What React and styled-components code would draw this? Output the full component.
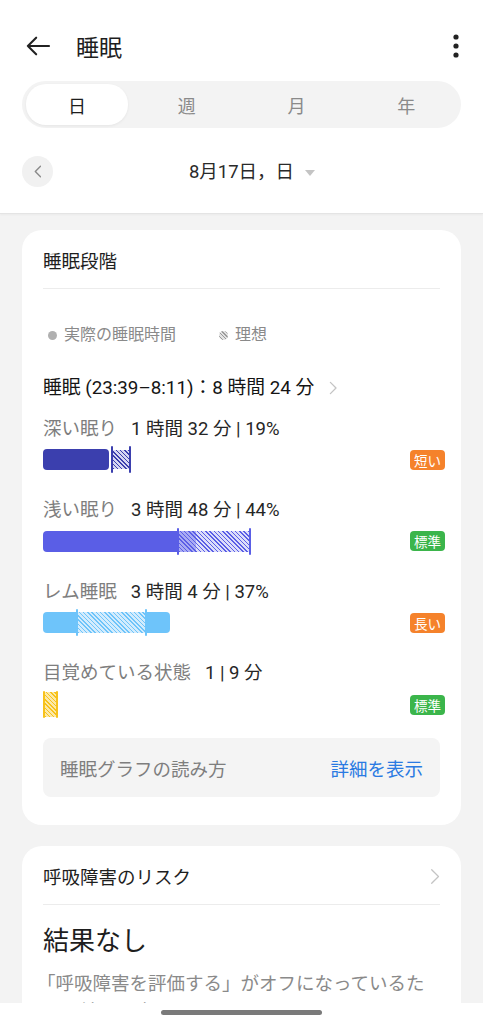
import React from "react";
import styled, { createGlobalStyle, css } from "styled-components";

const Global = createGlobalStyle`
  html, body { margin: 0; padding: 0; }
  body {
    background: #f3f3f3;
    font-family: Roboto, "Noto Sans CJK JP", "Noto Sans", sans-serif;
    color: #222;
    -webkit-font-smoothing: antialiased;
  }
  * { box-sizing: border-box; }
`;

const Page = styled.div`
  width: 483px;
  min-height: 1100px;
  background: #f3f3f3;
`;

const Header = styled.header`
  background: #fff;
  border-bottom: 1px solid #e4e4e4;
  box-shadow: 0 1px 2px rgba(0, 0, 0, 0.04);
`;

const TopBar = styled.div`
  height: 81px;
  padding: 10px 24px 0 26px;
  display: flex;
  align-items: center;
`;

const IconBtn = styled.button`
  border: 0;
  background: none;
  padding: 0;
  width: 24px;
  height: 24px;
  display: flex;
  align-items: center;
  justify-content: center;
  color: #222;
`;

const Title = styled.h1`
  margin: 0 0 0 26px;
  font-size: 23px;
  font-weight: 400;
  color: #1e1e1e;
  flex: 1;
`;

const Segmented = styled.div`
  margin: 0 22px;
  height: 47px;
  border-radius: 24px;
  background: #f3f3f3;
  display: grid;
  grid-template-columns: repeat(4, 1fr);
`;

const Tab = styled.div`
  margin: 3px 4px;
  border-radius: 20px;
  display: flex;
  align-items: center;
  justify-content: center;
  font-size: 18px;
  color: #8a8a8a;
  ${(p) =>
    p.$active &&
    css`
      background: #fff;
      color: #1e1e1e;
      box-shadow: 0 1px 3px rgba(0, 0, 0, 0.06);
    `}
`;

const DateRow = styled.div`
  margin: 28px 22px 0;
  padding-bottom: 26px;
  display: grid;
  grid-template-columns: 31px 1fr 31px;
  align-items: center;
`;

const RoundBtn = styled.div`
  width: 31px;
  height: 31px;
  border-radius: 50%;
  background: #f1f1f1;
  display: flex;
  align-items: center;
  justify-content: center;
`;

const DateLabel = styled.div`
  justify-self: center;
  position: relative;
  font-size: 18.5px;
  color: #2a2a2a;
  line-height: 24px;
`;

const Caret = styled.span`
  position: absolute;
  left: calc(100% + 11px);
  top: 10px;
  width: 0;
  height: 0;
  border-left: 5px solid transparent;
  border-right: 5px solid transparent;
  border-top: 6px solid #c4c4c4;
`;

const Content = styled.main`
  padding: 16px 22px 0;
  display: flex;
  flex-direction: column;
  gap: 21px;
`;

const Card = styled.section`
  background: #fff;
  border-radius: 20px;
  padding: 0 21px ${(p) => p.$pb || 28}px;
`;

const CardHead = styled.div`
  height: 59px;
  padding-top: 2px;
  display: flex;
  align-items: center;
  justify-content: space-between;
  border-bottom: 1px solid #ececec;
  font-size: 18.5px;
  color: #1e1e1e;
`;

const Legend = styled.div`
  margin-top: 36px;
  display: flex;
  align-items: center;
  gap: 43px;
  padding-left: 5px;
  font-size: 16px;
  line-height: 20px;
  color: #8a8a8a;
`;

const LegendItem = styled.span`
  display: flex;
  align-items: center;
  gap: 7px;
`;

const Dot = styled.span`
  width: 9px;
  height: 9px;
  border-radius: 50%;
  background: ${(p) =>
    p.$hatched
      ? "repeating-linear-gradient(45deg, #9a9a9a 0 1px, #e2e2e2 1px 2.5px)"
      : "#b0b0b0"};
`;

const Summary = styled.div`
  margin-top: 31px;
  display: flex;
  align-items: center;
  gap: 15px;
  font-size: 18.8px;
  line-height: 24px;
  color: #151515;
`;

const Stage = styled.div`
  margin-top: ${(p) => p.$mt}px;
`;

const StageLabel = styled.div`
  display: flex;
  align-items: baseline;
  gap: 14px;
  font-size: 18.5px;
  line-height: 24px;
`;

const StageName = styled.span`
  color: #7e7e7e;
`;

const StageValue = styled.span`
  color: #262626;
`;

const BarRow = styled.div`
  margin-top: ${(p) => p.$mt ?? 8.5}px;
  height: 21px;
  display: flex;
  align-items: center;
  justify-content: space-between;
`;

const Bar = styled.div`
  height: 21px;
  display: flex;
  align-items: center;
`;

const Solid = styled.div`
  height: 21px;
  width: ${(p) => p.$w}px;
  background: ${(p) => p.$c};
  border-radius: ${(p) => p.$r || "4px"};
`;

const Hatch = styled.div`
  height: ${(p) => p.$h || 21}px;
  width: ${(p) => p.$w}px;
  background: repeating-linear-gradient(
    45deg,
    ${(p) => p.$c} 0 1px,
    ${(p) => p.$bg} 1px 3px
  );
`;

const Marker = styled.div`
  width: 2px;
  height: ${(p) => p.$h || 27}px;
  background: ${(p) => p.$c};
  border-radius: 1px;
  margin-left: ${(p) => p.$ml || 0}px;
`;

const Badge = styled.span`
  width: 35px;
  height: 20px;
  border-radius: 4px;
  background: ${(p) => (p.$tone === "warn" ? "#f5822b" : "#3bb54b")};
  color: #fff;
  font-size: 13.5px;
  display: flex;
  align-items: center;
  justify-content: center;
  margin-right: -5px;
`;

const InfoBox = styled.div`
  margin-top: 23px;
  height: 59px;
  border-radius: 8px;
  background: #f4f4f4;
  padding: 0 17px;
  display: flex;
  align-items: center;
  justify-content: space-between;
  font-size: 18.5px;
`;

const InfoText = styled.span`
  color: #7e7e7e;
`;

const InfoLink = styled.span`
  color: #2a7ae2;
`;

const Result = styled.div`
  margin-top: 18px;
  font-size: 26px;
  line-height: 36px;
  color: #1e1e1e;
`;

const Desc = styled.p`
  margin: 11px 0 0;
  font-size: 18.5px;
  line-height: 28px;
  color: #8a8a8a;
  text-indent: -6px;
`;

const NavBar = styled.div`
  position: fixed;
  left: 0;
  right: 0;
  bottom: 0;
  height: 21px;
  background: #fff;
  display: flex;
  justify-content: center;
  padding-top: 7px;
`;

const Handle = styled.div`
  width: 161px;
  height: 5px;
  border-radius: 3px;
  background: #7a7a7a;
`;

const ArrowLeft = () => (
  <svg width="26" height="22" viewBox="0 0 26 22" fill="none">
    <path d="M25 11H2M11 2L2 11l9 9" stroke="#222" strokeWidth="2.2" strokeLinecap="round" strokeLinejoin="round" />
  </svg>
);

const Kebab = () => (
  <svg width="6" height="24" viewBox="0 0 6 24">
    <circle cx="3" cy="3" r="2.6" fill="#222" />
    <circle cx="3" cy="12" r="2.6" fill="#222" />
    <circle cx="3" cy="21" r="2.6" fill="#222" />
  </svg>
);

const Chevron = ({ dir = "right", size = 14, color = "#bdbdbd", w = 1.5 }) => (
  <svg width={size * 0.6} height={size} viewBox="0 0 6 10" fill="none">
    <path
      d={dir === "right" ? "M1 1l4 4-4 4" : "M5 1L1 5l4 4"}
      stroke={color}
      strokeWidth={w * (10 / size)}
      strokeLinecap="round"
      strokeLinejoin="round"
    />
  </svg>
);

const DEEP = "#3b3fae";
const LIGHT = "#5a5ee6";
const REM = "#6ec4fa";
const AWAKE = "#f7c21c";

const tabs = ["日", "週", "月", "年"];

export default function App() {
  return (
    <Page>
      <Global />
      <Header>
        <TopBar>
          <IconBtn><ArrowLeft /></IconBtn>
          <Title>睡眠</Title>
          <Kebab />
        </TopBar>
        <Segmented>
          {tabs.map((t, i) => (
            <Tab key={t} $active={i === 0}>{t}</Tab>
          ))}
        </Segmented>
        <DateRow>
          <RoundBtn><Chevron dir="left" size={13} color="#8a8a8a" w={1.4} /></RoundBtn>
          <DateLabel>
            8月17日，日
            <Caret />
          </DateLabel>
        </DateRow>
      </Header>

      <Content>
        <Card>
          <CardHead>睡眠段階</CardHead>
          <Legend>
            <LegendItem><Dot />実際の睡眠時間</LegendItem>
            <LegendItem><Dot $hatched />理想</LegendItem>
          </Legend>
          <Summary>
            <span>睡眠 (23:39–8:11)：8 時間 24 分</span>
            <Chevron size={14} color="#c4c4c4" w={1.3} />
          </Summary>

          <Stage $mt={17}>
            <StageLabel><StageName>深い眠り</StageName><StageValue>1 時間 32 分 | 19%</StageValue></StageLabel>
            <BarRow $mt={8}>
              <Bar>
                <Solid $w={66} $c={DEEP} />
                <Marker $c={DEEP} $ml={2} />
                <Hatch $w={16} $c={DEEP} $bg="#d6d7f2" $h={19} />
                <Marker $c={DEEP} />
              </Bar>
              <Badge $tone="warn">短い</Badge>
            </BarRow>
          </Stage>

          <Stage $mt={28}>
            <StageLabel><StageName>浅い眠り</StageName><StageValue>3 時間 48 分 | 44%</StageValue></StageLabel>
            <BarRow>
              <Bar>
                <Solid $w={134} $c={LIGHT} $r="4px 0 0 4px" />
                <Marker $c={LIGHT} />
                <Hatch $w={17} $c={LIGHT} $bg="#a9abf3" />
                <Hatch $w={53} $c={LIGHT} $bg="#dcddfa" />
                <Marker $c={LIGHT} />
              </Bar>
              <Badge>標準</Badge>
            </BarRow>
          </Stage>

          <Stage $mt={28}>
            <StageLabel><StageName>レム睡眠</StageName><StageValue>3 時間 4 分 | 37%</StageValue></StageLabel>
            <BarRow>
              <Bar>
                <Solid $w={33} $c={REM} $r="4px 0 0 4px" />
                <Marker $c={REM} />
                <Hatch $w={67} $c={REM} $bg="#d3ecfd" />
                <Marker $c={REM} />
                <Solid $w={23} $c={REM} $r="0 4px 4px 0" />
              </Bar>
              <Badge $tone="warn">長い</Badge>
            </BarRow>
          </Stage>

          <Stage $mt={28}>
            <StageLabel><StageName>目覚めている状態</StageName><StageValue>1 | 9 分</StageValue></StageLabel>
            <BarRow $mt={9}>
              <Bar>
                <Marker $c={AWAKE} $h={27} />
                <Hatch $w={11} $c={AWAKE} $bg="#fce9a8" $h={25} />
                <Marker $c={AWAKE} $h={27} />
              </Bar>
              <Badge>標準</Badge>
            </BarRow>
          </Stage>

          <InfoBox>
            <InfoText>睡眠グラフの読み方</InfoText>
            <InfoLink>詳細を表示</InfoLink>
          </InfoBox>
        </Card>

        <Card $pb={40}>
          <CardHead>
            <span>呼吸障害のリスク</span>
            <Chevron size={17} color="#c4c4c4" w={1.3} />
          </CardHead>
          <Result>結果なし</Result>
          <Desc>
            「呼吸障害を評価する」がオフになっているため、結果を表示できません。
          </Desc>
        </Card>
      </Content>

      <NavBar><Handle /></NavBar>
    </Page>
  );
}
